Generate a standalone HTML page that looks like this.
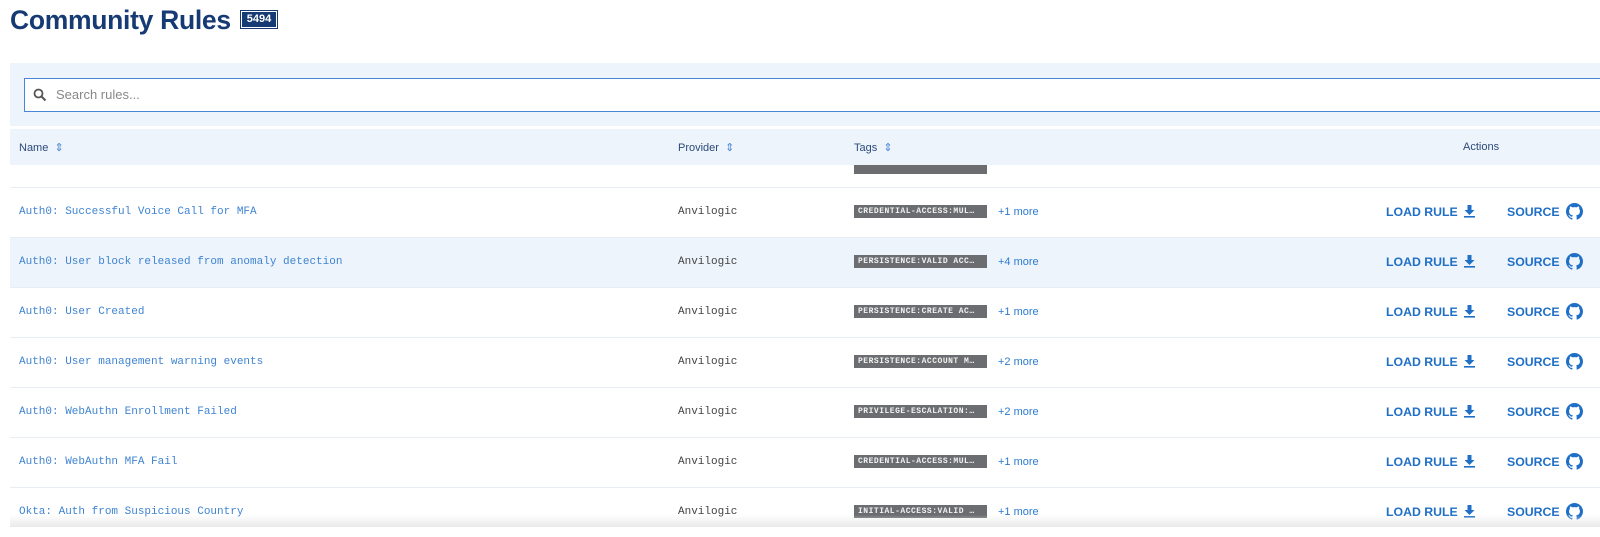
<!DOCTYPE html>
<html><head><meta charset="utf-8"><style>
*{box-sizing:border-box;margin:0;padding:0}
body{width:1600px;height:537px;overflow:hidden;background:#fff;font-family:"Liberation Sans",sans-serif;position:relative}
h1{position:absolute;left:10px;top:5px;font-size:26.5px;font-weight:bold;color:#163a73;letter-spacing:-0.3px}
.badge{position:absolute;left:241px;top:11px;width:36px;height:17px;background:#163a73;color:#fff;font-size:11px;font-weight:bold;text-align:center;line-height:15px;border:1px solid #fff;outline:1px solid #163a73}
.panel{position:absolute;left:10px;top:63px;width:1600px;height:63px;background:#eef4fb}
.search{position:absolute;left:24px;top:78px;width:1600px;height:34px;background:#fff;border:1px solid #4a86d6}
.search span{position:absolute;left:31px;top:8px;font-size:13px;color:#888}
.search svg{position:absolute;left:8px;top:9px}
.head{position:absolute;left:10px;top:129px;width:1600px;height:36px;background:#eef4fb;font-size:11px;color:#2b4a7a}
.head div{position:absolute;top:12px}
.row{position:absolute;left:10px;width:1600px;height:50px;border-top:1px solid #e8edf3}
.row.hl{background:#eef4fb}
.row div{position:absolute;top:18px}
.nm{left:9px;font-family:"Liberation Mono",monospace;font-size:11px;color:#3f84d2}
.pv{left:668px;font-family:"Liberation Mono",monospace;font-size:11px;color:#444}
.tg{left:844px;width:133px;height:13px;top:17px!important;background:#6b6d70;color:#f2f2f2;font-family:"Liberation Mono",monospace;font-size:8px;font-weight:bold;line-height:13px;padding-left:4px;letter-spacing:0.5px;white-space:nowrap;overflow:hidden}
.mr{left:988px;font-size:11px;color:#2c7bd0}
.lr{left:1376px;font-size:12.3px;font-weight:bold;color:#1f6fc6;top:17px!important}
.dl{left:1454px;top:16px!important}
.sr{left:1497px;font-size:12.3px;font-weight:bold;color:#1f6fc6;top:17px!important}
.gh{left:1556px;top:15px!important}
.fade{position:absolute;left:10px;top:515px;width:1600px;height:12px;background:linear-gradient(#fff0,#e9e9e9)}
</style></head><body>
<h1>Community Rules</h1><div class="badge">5494</div>
<div class="panel"></div>
<div class="search"><svg width="14" height="14" viewBox="0 0 14 14"><circle cx="5.5" cy="5.5" r="4" fill="none" stroke="#555" stroke-width="1.8"/><path d="M8.5 8.5L12.5 12.5" stroke="#555" stroke-width="2"/></svg><span>Search rules...</span></div>

<div class="row" style="top:137px;height:50px"><div class="tg" style="top:23px!important"></div></div>

<div class="head">
<div style="left:9px">Name &nbsp;<span style="color:#4a86d6">⇕</span></div>
<div style="left:668px">Provider &nbsp;<span style="color:#4a86d6">⇕</span></div>
<div style="left:844px">Tags &nbsp;<span style="color:#4a86d6">⇕</span></div>
<div style="left:1453px">Actions</div>
</div>

<div class="row" style="top:187px"><div class="nm">Auth0: Successful Voice Call for MFA</div><div class="pv">Anvilogic</div><div class="tg">CREDENTIAL-ACCESS:MUL…</div><div class="mr">+1 more</div><div class="lr">LOAD RULE</div><div class="dl"><svg width="11" height="14" viewBox="0 0 11 14"><path d="M3.5 1h4v5h3l-5 5-5-5h3z" fill="#1f6fc6"/><rect x="0" y="12" width="11" height="1.6" fill="#1f6fc6"/></svg></div><div class="sr">SOURCE</div><div class="gh"><svg width="17" height="17" viewBox="0 0 16 16"><path fill="#1f6fc6" d="M8 0C3.58 0 0 3.580 0 8c0 3.54 2.29 6.530 5.47 7.59.4.07.55-.17.55-.38v-1.33c-2.23.48-2.7-1.07-2.7-1.07-.36-.92-.89-1.17-.89-1.17-.73-.5.05-.49.05-.49.8.06 1.23.83 1.23.83.71 1.22 1.87.87 2.33.66.07-.52.28-.87.51-1.07-1.78-.2-3.64-.89-3.64-3.95 0-.87.31-1.59.82-2.150-.08-.2-.36-1.02.08-2.120 0 0 .67-.21 2.2.82.64-.18 1.32-.27 2-.27.68 0 1.36.09 2 .27 1.53-1.04 2.2-.82 2.2-.82.44 1.1.16 1.92.08 2.12.51.56.82 1.27.82 2.15 0 3.07-1.87 3.75-3.65 3.95.29.25.54.73.54 1.48v2.2c0 .21.15.46.55.38A8.01 8.01 0 0016 8c0-4.42-3.58-8-8-8z"/></svg></div></div>
</body>
<script>
const data=[["Auth0: User block released from anomaly detection","PERSISTENCE:VALID ACC…","+4 more",1],["Auth0: User Created","PERSISTENCE:CREATE AC…","+1 more",0],["Auth0: User management warning events","PERSISTENCE:ACCOUNT M…","+2 more",0],["Auth0: WebAuthn Enrollment Failed","PRIVILEGE-ESCALATION:…","+2 more",0],["Auth0: WebAuthn MFA Fail","CREDENTIAL-ACCESS:MUL…","+1 more",0],["Okta: Auth from Suspicious Country","INITIAL-ACCESS:VALID …","+1 more",0]];
const first=document.querySelectorAll('.row')[1];
data.forEach((d,i)=>{const r=first.cloneNode(true);r.style.top=(237+i*50)+'px';if(d[3])r.classList.add('hl');r.querySelector('.nm').textContent=d[0];r.querySelector('.tg').textContent=d[1];r.querySelector('.mr').textContent=d[2];document.body.appendChild(r);});
const f=document.createElement('div');f.className='fade';document.body.appendChild(f);
const w=document.createElement('div');w.style.cssText='position:absolute;left:0;top:527px;width:1600px;height:10px;background:#fff';document.body.appendChild(w);
</script>
</html>
